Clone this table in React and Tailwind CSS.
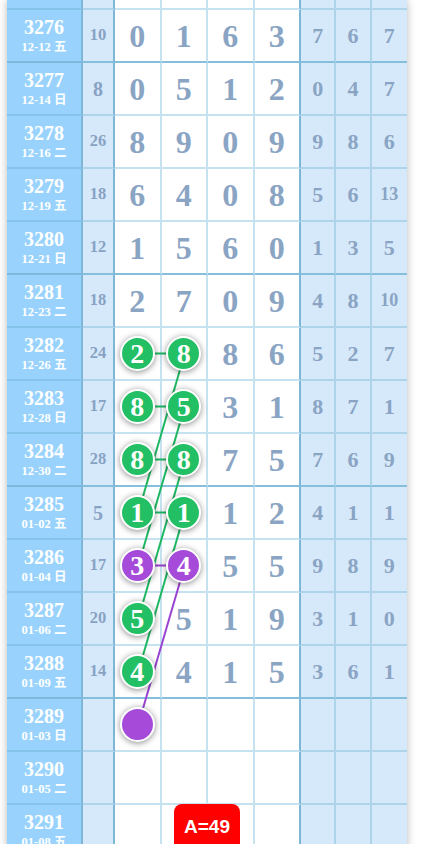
import React from 'react'

const ROWS = [
  { no: '3276', date: '12-12 五', miss: '10', d: ['0', '1', '6', '3'], r: ['7', '6', '7'] },
  { no: '3277', date: '12-14 日', miss: '8', d: ['0', '5', '1', '2'], r: ['0', '4', '7'] },
  { no: '3278', date: '12-16 二', miss: '26', d: ['8', '9', '0', '9'], r: ['9', '8', '6'] },
  { no: '3279', date: '12-19 五', miss: '18', d: ['6', '4', '0', '8'], r: ['5', '6', '13'] },
  { no: '3280', date: '12-21 日', miss: '12', d: ['1', '5', '6', '0'], r: ['1', '3', '5'] },
  { no: '3281', date: '12-23 二', miss: '18', d: ['2', '7', '0', '9'], r: ['4', '8', '10'] },
  { no: '3282', date: '12-26 五', miss: '24', d: ['2', '8', '8', '6'], r: ['5', '2', '7'], balls: ['g', 'g'] },
  { no: '3283', date: '12-28 日', miss: '17', d: ['8', '5', '3', '1'], r: ['8', '7', '1'], balls: ['g', 'g'] },
  { no: '3284', date: '12-30 二', miss: '28', d: ['8', '8', '7', '5'], r: ['7', '6', '9'], balls: ['g', 'g'] },
  { no: '3285', date: '01-02 五', miss: '5', d: ['1', '1', '1', '2'], r: ['4', '1', '1'], balls: ['g', 'g'] },
  { no: '3286', date: '01-04 日', miss: '17', d: ['3', '4', '5', '5'], r: ['9', '8', '9'], balls: ['p', 'p'] },
  { no: '3287', date: '01-06 二', miss: '20', d: ['5', '5', '1', '9'], r: ['3', '1', '0'], balls: ['g'] },
  { no: '3288', date: '01-09 五', miss: '14', d: ['4', '4', '1', '5'], r: ['3', '6', '1'], balls: ['g'] },
  { no: '3289', date: '01-03 日', miss: '', d: ['', '', '', ''], r: ['', '', ''], balls: ['pe'] },
  { no: '3290', date: '01-05 二', miss: '', d: ['', '', '', ''], r: ['', '', ''] },
  { no: '3291', date: '01-08 五', miss: '', d: ['', '', '', ''], r: ['', '', ''] },
]

const GRID = 'grid grid-cols-[76px_32px_46.5px_46.5px_46.5px_46.5px_35.33px_35.33px_35.34px]'
const SERIF = "font-['Liberation_Serif','Noto_Sans_CJK_SC',serif] font-bold"

// ball centres in page coordinates
const X1 = 138.3
const X2 = 184.75
const cy = (i) => 35.5 + 53 * i

const GREEN_LINES = [
  [X1, cy(6), X2, cy(6)],
  [X1, cy(7), X2, cy(7)],
  [X1, cy(8), X2, cy(8)],
  [X1, cy(9), X2, cy(9)],
  [X2, cy(6), X1, cy(9)],
  [X2, cy(7), X1, cy(10)],
  [X2, cy(8), X1, cy(11)],
  [X2, cy(9), X1, cy(12)],
]
const PURPLE_LINES = [
  [X1, cy(10), X2, cy(10)],
  [X2, cy(10), X1, cy(13)],
]

function Ball({ kind, value }) {
  const purple = kind === 'p' || kind === 'pe'
  return (
    <div
      className={`relative z-20 flex h-[35px] w-[35px] items-center justify-center rounded-full border-2 border-white text-[28px] leading-none text-white shadow-[0_1px_6px_rgba(0,0,0,0.45)] ${SERIF} ${
        purple ? 'bg-[#a64bd9]' : 'bg-[#22bf64]'
      }`}
    >
      {kind === 'pe' ? '' : value}
    </div>
  )
}

function Row({ row, thick }) {
  const lbl = thick ? 'border-b-[#7fb8da]' : 'border-b-[#86c3e8]'
  const blu = thick ? 'border-b-[#86bedd]' : 'border-b-[#aed4ea]'
  const wht = thick ? 'border-b-[#86bedd]' : 'border-b-[#c6e2f0]'
  const cell = 'flex items-center justify-center border-b-2'

  return (
    <div className={`${GRID} h-[53px]`}>
      {/* issue number + date */}
      <div className={`flex flex-col items-center justify-center border-r-2 border-r-[#7db6d6] bg-[#99d3fd] text-white ${lbl} border-b-2 ${SERIF}`}>
        <span className="text-[20px] leading-[22px]">{row.no}</span>
        <span className="text-[12.5px] leading-[18px]">{row.date}</span>
      </div>

      {/* miss count */}
      <div className={`${cell} ${blu} border-r-2 border-r-[#7db6d6] bg-[#d6e9fa] text-[#87a2c3] ${SERIF} ${row.miss.length > 1 ? 'text-[16.5px]' : 'text-[20px]'}`}>
        {row.miss}
      </div>

      {/* the four digits */}
      {row.d.map((v, k) => (
        <div
          key={k}
          className={`${cell} ${wht} bg-white text-[32px] text-[#8aa4c4] ${SERIF} ${
            k === 3 ? 'border-r-2 border-r-[#7db6d6]' : 'border-r-2 border-r-[#c6e2f0]'
          }`}
        >
          {row.balls && row.balls[k] ? <Ball kind={row.balls[k]} value={v} /> : v}
        </div>
      ))}

      {/* right side stats */}
      {row.r.map((v, k) => (
        <div
          key={k}
          className={`${cell} ${blu} bg-[#d6e9fa] text-[#8aa4c4] ${SERIF} ${v.length > 1 ? 'text-[18px]' : 'text-[22px]'} ${
            k < 2 ? 'border-r-2 border-r-[#aed4ea]' : ''
          }`}
        >
          {v}
        </div>
      ))}
    </div>
  )
}

export default function App() {
  return (
    <div className="relative h-[844px] w-[430px] overflow-hidden bg-white">
      <div className="ml-[7px] w-[400px] shadow-[0_0_8px_rgba(0,0,0,0.28)]">
        {/* tail of the previous row, scrolled out */}
        <div className={`${GRID} h-[10px]`}>
          <div className="border-b-2 border-r-2 border-b-[#86c3e8] border-r-[#7db6d6] bg-[#99d3fd]" />
          <div className="border-b-2 border-r-2 border-b-[#aed4ea] border-r-[#7db6d6] bg-[#d6e9fa]" />
          <div className="border-b-2 border-r-2 border-b-[#c6e2f0] border-r-[#c6e2f0] bg-white" />
          <div className="border-b-2 border-r-2 border-b-[#c6e2f0] border-r-[#c6e2f0] bg-white" />
          <div className="border-b-2 border-r-2 border-b-[#c6e2f0] border-r-[#c6e2f0] bg-white" />
          <div className="border-b-2 border-r-2 border-b-[#c6e2f0] border-r-[#7db6d6] bg-white" />
          <div className="border-b-2 border-r-2 border-b-[#aed4ea] border-r-[#aed4ea] bg-[#d6e9fa]" />
          <div className="border-b-2 border-r-2 border-b-[#aed4ea] border-r-[#aed4ea] bg-[#d6e9fa]" />
          <div className="border-b-2 border-b-[#aed4ea] bg-[#d6e9fa]" />
        </div>
        {ROWS.map((row) => (
          <Row key={row.no} row={row} thick={(Number(row.no) - 3276) % 4 === 0} />
        ))}
      </div>

      {/* trend lines */}
      <svg className="pointer-events-none absolute left-0 top-0 z-10" width="430" height="844">
        {GREEN_LINES.map(([x1, y1, x2, y2], i) => (
          <line key={i} x1={x1} y1={y1} x2={x2} y2={y2} stroke="#1fb862" strokeWidth="2" />
        ))}
        {PURPLE_LINES.map(([x1, y1, x2, y2], i) => (
          <line key={i} x1={x1} y1={y1} x2={x2} y2={y2} stroke="#9a42d2" strokeWidth="2" />
        ))}
      </svg>

      {/* sum badge */}
      <div className="absolute left-[174px] top-[804px] z-30 flex h-[48px] w-[66px] justify-center rounded-lg bg-[#ff0000] pt-[12px] font-['Liberation_Sans',Arial,sans-serif] text-[19px] font-bold leading-[22px] text-white">
        A=49
      </div>
    </div>
  )
}
